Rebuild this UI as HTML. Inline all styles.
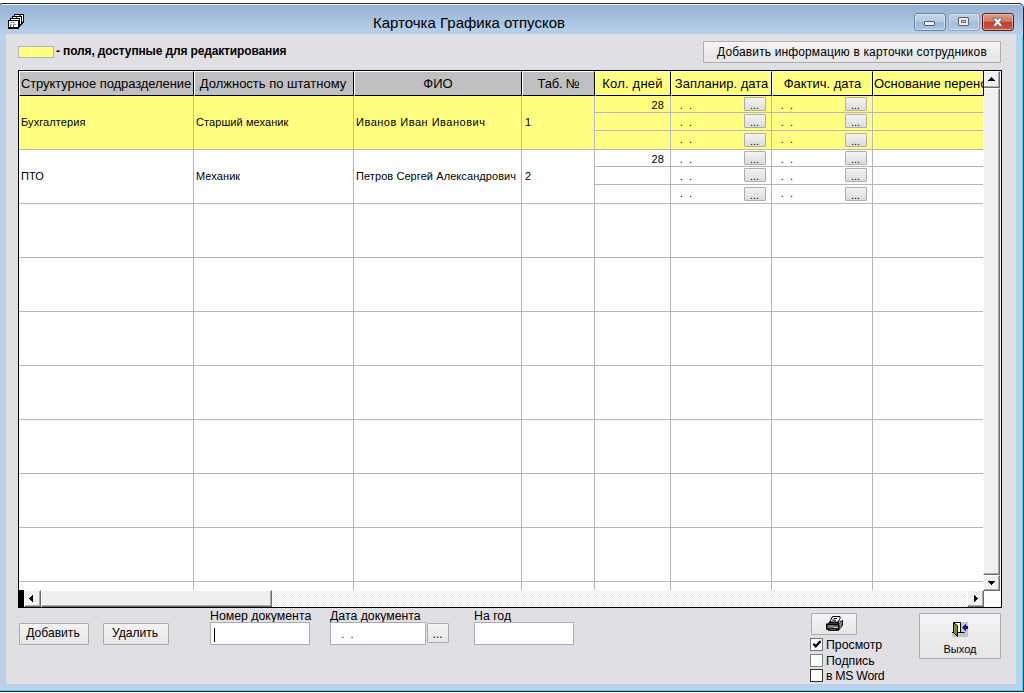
<!DOCTYPE html>
<html lang="ru">
<head>
<meta charset="utf-8">
<title>Карточка Графика отпусков</title>
<style>
*{box-sizing:border-box;margin:0;padding:0}
html,body{width:1024px;height:693px;overflow:hidden;background:#fff}
body{font-family:"Liberation Sans",sans-serif;color:#000;position:relative}
.abs{position:absolute}
#win{position:absolute;left:-1px;top:3px;width:1025px;height:689px;background:#b9d1ea;border:1px solid #2b2b2b;border-radius:4px 5px 0 0 / 2px 5px 0 0;overflow:hidden;box-shadow:inset 0 1px 0 #f6fafe,inset 0 -1px 0 #2fd6ee,inset -1px 0 0 #3fd0ee,inset 0 -2px 0 #c8d2ec}
#titlegrad{position:absolute;left:0;top:1px;width:1023px;height:32px;background:linear-gradient(#98b4d4 0,#a3bddb 35%,#b4cde8 75%,#b9d1ea 100%)}
#title{position:absolute;left:0;top:10px;width:938px;text-align:center;font-size:15px;line-height:18px;white-space:nowrap}
#content{position:absolute;left:6px;top:30px;width:1010px;height:650px;background:#e0dfe3}
/* everything below positioned in page coords */
#layer{position:absolute;left:0;top:0;width:1024px;height:693px}
.lbl{position:absolute;font-size:12.3px;line-height:15px;white-space:nowrap}
.btn{position:absolute;border:1px solid #adadad;background:linear-gradient(#f2f2f2,#ebebeb 50%,#dddddd 50%,#cfcfcf);font-size:12.1px;text-align:center;white-space:nowrap;border-radius:1px}
.btn.flat{background:linear-gradient(#f4f4f4,#e6e6e6)}
.inp{position:absolute;background:#fff;border:1px solid #abadb3}
/* grid */
#grid{position:absolute;left:18px;top:70px;width:984px;height:538px;background:#fff;border:1px solid #000;overflow:hidden}
.hc{position:absolute;top:0;height:25px;background:#c0c0c0;border-top:1px solid #fff;border-left:1px solid #fff;border-bottom:1px solid #000;border-right:1px solid #000;font-size:13px;line-height:24px;text-align:center;white-space:nowrap;overflow:hidden}
.hc.y{background:#ffff80}
.vl{position:absolute;width:1px;background:#b6b6b6}
.hl{position:absolute;height:1px;background:#b6b6b6}
.ct{position:absolute;font-size:11px;line-height:13px;white-space:nowrap;letter-spacing:0.08px}
.db{position:absolute;width:22px;height:14px;border:1px solid #adadad;background:linear-gradient(#f3f3f3,#dcdcdc);font-size:11px;line-height:14px;text-align:center;text-indent:-1px;border-radius:1px;overflow:hidden}

.sbb{position:absolute;background:#f0f0f0;border-top:1px solid #fff;border-left:1px solid #fff;border-right:1px solid #6d6d6d;border-bottom:1px solid #6d6d6d;box-shadow:inset -1px -1px 0 #a9a9a9}
.dt{white-space:pre}
.cb{position:absolute;width:13px;height:13px;background:#fff;border:1px solid #747474}
.wb{position:absolute;top:9px;height:18px;border:1px solid #6a7e99;border-radius:3px;box-shadow:inset 0 0 0 1px rgba(255,255,255,.45)}
</style>
</head>
<body>
<div id="win">
  <div id="titlegrad"></div>
  <div id="title">Карточка Графика отпусков</div>
  <div id="content"></div>
  <!-- app icon -->
  <svg class="abs" style="left:8px;top:10px" width="17" height="16" viewBox="0 0 17 16" shape-rendering="crispEdges">
    <path d="M10 6L16 0V8L10 15Z" fill="#000"/>
    <rect x="6.5" y="0.5" width="9" height="8" fill="#fff" stroke="#000"/>
    <rect x="4.5" y="2.5" width="9" height="8" fill="#fff" stroke="#000"/>
    <rect x="2.5" y="4.5" width="9" height="8" fill="#fff" stroke="#000"/>
    <rect x="0.5" y="6.5" width="10" height="8" fill="#fff" stroke="#000"/>
    <rect x="0" y="13" width="11" height="2" fill="#000"/>
    <path d="M10 15L16 8V6L11 12Z" fill="#000" shape-rendering="auto"/>
    <rect x="2" y="8" width="5" height="1" fill="#9a9a9a"/><rect x="2" y="10" width="2" height="1" fill="#9a9a9a"/><rect x="5" y="10" width="3" height="1" fill="#9a9a9a"/>
    <rect x="2" y="11" width="1" height="2" fill="#7a5a20"/><rect x="5" y="11" width="1" height="2" fill="#7a5a20"/>
    <rect x="8" y="3" width="1" height="1" fill="#7a5a20"/><rect x="11" y="1" width="2" height="1" fill="#7a5a20"/>
  </svg>
  <!-- window buttons -->
  <div class="wb" style="left:914px;width:32px;background:linear-gradient(#c3d5ea 0,#b4cae4 48%,#9db9d9 52%,#a9c3e0 100%)">
    <div class="abs" style="left:9px;top:7px;width:11px;height:5px;background:#f1efe9;border:1px solid #55606e;border-radius:1px"></div>
  </div>
  <div class="wb" style="left:948px;width:32px;border-color:#8ea3bd;background:linear-gradient(#b9cee6 0,#b0c7e2 48%,#a3bedc 52%,#adc6e2 100%)">
    <div class="abs" style="left:9px;top:3px;width:11px;height:9px;background:#eceae6;border:1px solid #5b6470;border-radius:1px"><div class="abs" style="left:2px;top:2px;width:5px;height:3px;background:#b4c6e0;border:1px solid #66748e"></div></div>
  </div>
  <div class="wb" style="left:982px;width:32px;border-color:#5e1a14;background:linear-gradient(#dd9a86 0,#d47c66 45%,#c0402a 52%,#c85a40 100%)">
    <svg class="abs" style="left:8px;top:3px" width="14" height="10" viewBox="0 0 14 10"><path d="M1.8 1.1H5.3L6.7 2.9L8.1 1.1H11.6L8.7 5L11.8 9.2H8.2L6.7 7.2L5.2 9.2H1.6L4.7 5Z" fill="#fff" stroke="#6a6e7a" stroke-width="1" stroke-linejoin="round"/></svg>
  </div>
</div>
<div id="layer">
  <!-- legend -->
  <div class="abs" style="left:18px;top:46px;width:36px;height:12px;background:#ffff80;border:1px solid #a9b6c8"></div>
  <div class="lbl" style="left:56px;top:44px;font-size:12px;font-weight:bold;letter-spacing:-0.14px">- поля, доступные для редактирования</div>
  <div class="btn flat" style="left:703px;top:41px;width:298px;height:22px;line-height:20px;font-size:12px;letter-spacing:0.13px">Добавить информацию в карточки сотрудников</div>

  <div id="grid">
    <div class="abs" style="left:0;top:25px;width:964px;height:53px;background:#ffff80"></div>
    <div class="hc" style="left:0px;width:175px;letter-spacing:-0.08px;text-indent:-1px">Структурное подразделение</div>
    <div class="hc" style="left:175px;width:160px;text-indent:-2px">Должность по штатному</div>
    <div class="hc" style="left:335px;width:168px">ФИО</div>
    <div class="hc" style="left:503px;width:73px;letter-spacing:-0.2px">Таб. №</div>
    <div class="hc y" style="left:576px;width:76px;letter-spacing:0.2px;text-indent:-1px">Кол. дней</div>
    <div class="hc y" style="left:652px;width:101px">Запланир. дата</div>
    <div class="hc y" style="left:753px;width:101px">Фактич. дата</div>
    <div class="hc y" style="left:854px;width:111px;text-align:left;padding-left:0">Основание переноса</div>
    <div class="vl" style="left:174px;top:25px;height:494px"></div>
    <div class="vl" style="left:334px;top:25px;height:494px"></div>
    <div class="vl" style="left:502px;top:25px;height:494px"></div>
    <div class="vl" style="left:575px;top:25px;height:494px"></div>
    <div class="vl" style="left:651px;top:25px;height:494px"></div>
    <div class="vl" style="left:752px;top:25px;height:494px"></div>
    <div class="vl" style="left:853px;top:25px;height:494px"></div>
    <div class="hl" style="left:0;top:78px;width:964px"></div>
    <div class="hl" style="left:0;top:132px;width:964px"></div>
    <div class="hl" style="left:0;top:186px;width:964px"></div>
    <div class="hl" style="left:0;top:240px;width:964px"></div>
    <div class="hl" style="left:0;top:294px;width:964px"></div>
    <div class="hl" style="left:0;top:348px;width:964px"></div>
    <div class="hl" style="left:0;top:402px;width:964px"></div>
    <div class="hl" style="left:0;top:456px;width:964px"></div>
    <div class="hl" style="left:0;top:510px;width:964px"></div>
    <div class="hl" style="left:576px;top:41px;width:388px"></div>
    <div class="hl" style="left:576px;top:59px;width:388px"></div>
    <div class="hl" style="left:576px;top:95px;width:388px"></div>
    <div class="hl" style="left:576px;top:113px;width:388px"></div>
    <div class="vl" style="left:174px;top:25px;height:53px;background:#b6b6c8"></div>
    <div class="vl" style="left:334px;top:25px;height:53px;background:#b6b6c8"></div>
    <div class="vl" style="left:502px;top:25px;height:53px;background:#b6b6c8"></div>
    <div class="vl" style="left:575px;top:25px;height:53px;background:#b6b6c8"></div>
    <div class="vl" style="left:651px;top:25px;height:53px;background:#b6b6c8"></div>
    <div class="vl" style="left:752px;top:25px;height:53px;background:#b6b6c8"></div>
    <div class="vl" style="left:853px;top:25px;height:53px;background:#b6b6c8"></div>
    <div class="hl" style="left:576px;top:41px;width:388px;background:#b6b6c8"></div>
    <div class="hl" style="left:576px;top:59px;width:388px;background:#b6b6c8"></div>
    <div class="ct" style="left:2px;top:45px">Бухгалтерия</div>
    <div class="ct" style="left:177px;top:45px">Старший механик</div>
    <div class="ct" style="left:337px;top:45px;letter-spacing:0.5px">Иванов Иван Иванович</div>
    <div class="ct" style="left:506px;top:45px">1</div>
    <div class="ct" style="left:576px;top:28px;width:69px;text-align:right">28</div>
    <div class="ct dt" style="left:660.7px;top:28px">.  .</div>
    <div class="db" style="left:725px;top:26px">...</div>
    <div class="ct dt" style="left:761.7px;top:28px">.  .</div>
    <div class="db" style="left:826px;top:26px">...</div>
    <div class="ct dt" style="left:660.7px;top:45px">.  .</div>
    <div class="db" style="left:725px;top:43px">...</div>
    <div class="ct dt" style="left:761.7px;top:45px">.  .</div>
    <div class="db" style="left:826px;top:43px">...</div>
    <div class="ct dt" style="left:660.7px;top:62px">.  .</div>
    <div class="db" style="left:725px;top:62px">...</div>
    <div class="ct dt" style="left:761.7px;top:62px">.  .</div>
    <div class="db" style="left:826px;top:62px">...</div>
    <div class="ct" style="left:2px;top:99px">ПТО</div>
    <div class="ct" style="left:177px;top:99px">Механик</div>
    <div class="ct" style="left:337px;top:99px">Петров Сергей Александрович</div>
    <div class="ct" style="left:506px;top:99px">2</div>
    <div class="ct" style="left:576px;top:82px;width:69px;text-align:right">28</div>
    <div class="ct dt" style="left:660.7px;top:82px">.  .</div>
    <div class="db" style="left:725px;top:80px">...</div>
    <div class="ct dt" style="left:761.7px;top:82px">.  .</div>
    <div class="db" style="left:826px;top:80px">...</div>
    <div class="ct dt" style="left:660.7px;top:99px">.  .</div>
    <div class="db" style="left:725px;top:97px">...</div>
    <div class="ct dt" style="left:761.7px;top:99px">.  .</div>
    <div class="db" style="left:826px;top:97px">...</div>
    <div class="ct dt" style="left:660.7px;top:116px">.  .</div>
    <div class="db" style="left:725px;top:116px">...</div>
    <div class="ct dt" style="left:761.7px;top:116px">.  .</div>
    <div class="db" style="left:826px;top:116px">...</div>
    <!-- vertical scrollbar -->
    <div class="abs" style="left:964px;top:0;width:18px;height:520px;background:#efefef"></div>
    <div class="sbb" style="left:964px;top:0;width:17px;height:17px"></div><div class="abs" style="left:972px;top:6px;width:1px;height:1px;background:#000"></div><div class="abs" style="left:971px;top:7px;width:3px;height:1px;background:#000"></div><div class="abs" style="left:970px;top:8px;width:5px;height:1px;background:#000"></div><div class="abs" style="left:969px;top:9px;width:7px;height:1px;background:#000"></div>
    <div class="sbb" style="left:964px;top:17px;width:17px;height:487px;background:#f0f0f0"></div>
    <div class="sbb" style="left:964px;top:504px;width:17px;height:16px"></div><div class="abs" style="left:972px;top:513px;width:1px;height:1px;background:#000"></div><div class="abs" style="left:971px;top:512px;width:3px;height:1px;background:#000"></div><div class="abs" style="left:970px;top:511px;width:5px;height:1px;background:#000"></div><div class="abs" style="left:969px;top:510px;width:7px;height:1px;background:#000"></div>
    <div class="abs" style="left:964px;top:0;width:1px;height:25px;background:#000"></div>
    <!-- horizontal scrollbar -->
    <div class="abs" style="left:0;top:519px;width:965px;height:17px;background:repeating-conic-gradient(#ffffff 0 25%,#ebebeb 0 50%) 0 0/2px 2px"></div>
    <div class="abs" style="left:0;top:519px;width:5px;height:17px;background:#000"></div>
    <div class="sbb" style="left:5px;top:519px;width:17px;height:17px"></div><div class="abs" style="left:10px;top:527px;width:1px;height:1px;background:#000"></div><div class="abs" style="left:11px;top:526px;width:1px;height:3px;background:#000"></div><div class="abs" style="left:12px;top:525px;width:1px;height:5px;background:#000"></div><div class="abs" style="left:13px;top:524px;width:1px;height:7px;background:#000"></div>
    <div class="sbb" style="left:22px;top:519px;width:231px;height:17px;background:#efefef"></div>
    <div class="sbb" style="left:948px;top:519px;width:17px;height:17px"></div><div class="abs" style="left:958px;top:527px;width:1px;height:1px;background:#000"></div><div class="abs" style="left:957px;top:526px;width:1px;height:3px;background:#000"></div><div class="abs" style="left:956px;top:525px;width:1px;height:5px;background:#000"></div><div class="abs" style="left:955px;top:524px;width:1px;height:7px;background:#000"></div>
    <div class="abs" style="left:965px;top:520px;width:17px;height:16px;background:#fff"></div>
  </div>

  <!-- bottom controls -->
  <div class="btn flat" style="left:19px;top:623px;width:70px;height:22px;line-height:19px;text-indent:-2px">Добавить</div>
  <div class="btn flat" style="left:103px;top:623px;width:66px;height:22px;line-height:19px;text-indent:-2px">Удалить</div>
  <div class="lbl" style="left:210px;top:609px">Номер документа</div>
  <div class="inp" style="left:210px;top:622px;width:100px;height:23px"><div class="abs" style="left:3px;top:5px;width:1px;height:14px;background:#000"></div></div>
  <div class="lbl" style="left:330px;top:609px">Дата документа</div>
  <div class="inp" style="left:330px;top:622px;width:96px;height:23px"><span class="ct dt" style="left:10.2px;top:5px">.  .</span></div>
  <div class="btn flat" style="left:427px;top:623px;width:22px;height:20px;line-height:21px;font-size:12px;text-indent:-1px">...</div>
  <div class="lbl" style="left:474px;top:609px">На год</div>
  <div class="inp" style="left:474px;top:622px;width:100px;height:23px"></div>
  <div class="btn flat" style="left:811px;top:613px;width:46px;height:22px">
    <svg class="abs" style="left:14px;top:2px" width="18" height="16" viewBox="0 0 18 16">
      <path d="M12.5 6.5L16.5 4.5V9L12.5 14.5Z" fill="#6b6b6b" stroke="#000"/>
      <path d="M13 6.8L16 5.3M13 9L16 6.8M13 11.5L16 8.5M13 13.5L15 11" stroke="#e8e8e8" stroke-width="0.7" stroke-dasharray="1 1"/>
      <path d="M6.5 0.5H14V2.5L12 6H3.8Z" fill="#fff" stroke="#000" stroke-linejoin="round"/>
      <path d="M7.5 2.5H11.2M6.2 4.3H10" stroke="#000" stroke-width="1.1"/>
      <path d="M3 6H12.5V8.5H0.8Z" fill="#000"/>
      <path d="M2.8 7.6H11.5" stroke="#8a8a8a" stroke-width="0.8"/>
      <rect x="0.7" y="8.3" width="12" height="4.6" fill="#7d7d7d" stroke="#000" stroke-width="1.4"/>
      <path d="M8 10.2H11.2" stroke="#000" stroke-width="1"/>
      <path d="M8 11.3H11.6" stroke="#fff" stroke-width="1"/>
      <path d="M0.8 12.8H12.8L11.5 15H2.5Z" fill="#000"/>
      <path d="M2.8 13.8H10.5" stroke="#8a8a8a" stroke-width="0.8"/>
    </svg>
  </div>
  <div class="cb" style="left:810px;top:638px"><svg class="abs" style="left:1px;top:0" width="10" height="10" viewBox="0 0 10 10"><path d="M1.4 4.8L3.8 7.3L8.6 2" fill="none" stroke="#000" stroke-width="2.2"/></svg></div>
  <div class="lbl" style="left:826px;top:638px">Просмотр</div>
  <div class="cb" style="left:810px;top:654px;border-color:#808080"></div>
  <div class="lbl" style="left:826px;top:654px">Подпись</div>
  <div class="cb" style="left:810px;top:669px;border-color:#333"></div>
  <div class="lbl" style="left:826px;top:669px;letter-spacing:-0.3px">в MS Word</div>
  <div class="btn flat" style="left:919px;top:613px;width:82px;height:46px">
    <svg class="abs" style="left:32px;top:8px" width="16" height="16" viewBox="0 0 16 16">
      <rect x="8" y="0" width="8" height="15" fill="#c6c6c6"/><rect x="0" y="11" width="16" height="4" fill="#c6c6c6"/>
      <rect x="2" y="1" width="6" height="10" fill="#fff"/>
      <path d="M1.5 0.5H8.5V10.5" fill="none" stroke="#000"/>
      <path d="M0 10.5H2M6 10.5H12.5" stroke="#000"/>
      <path d="M1.5 0.8L5.5 3.8V14.5L1.5 10.5Z" fill="#8e8e00" stroke="#000" stroke-linejoin="round"/>
      <path d="M10 5.5L14 1.7V4H16V7H14V9.3Z" fill="#0000a8"/>
    </svg>
    <div class="abs" style="left:0;top:29px;width:80px;text-align:center;font-size:11px;line-height:13px">Выход</div>
  </div>
</div>
</body>
</html>
